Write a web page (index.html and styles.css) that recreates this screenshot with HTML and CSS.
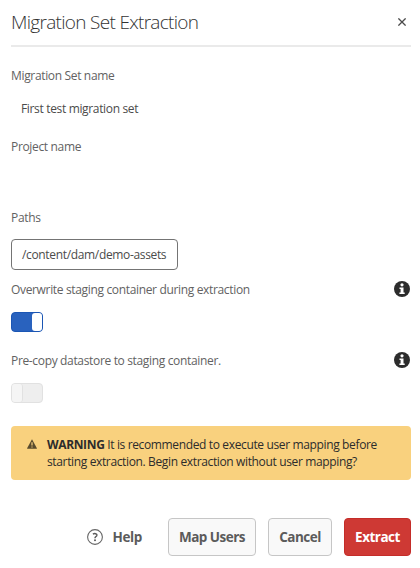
FILE: index.html
```html
<!DOCTYPE html>
<html lang="en">
<head>
<meta charset="utf-8">
<title>Migration Set Extraction</title>
<link rel="stylesheet" href="styles.css">
</head>
<body>
<main class="dialog">
  <header class="header">
    <h1 class="title"><span>Migration Set Extraction</span></h1>
    <button class="close" aria-label="Close"><svg width="8" height="8" viewBox="0 0 8 8"><path d="M.4.4 7.6 7.6M7.6.4.4 7.6" stroke="#4b4b4b" stroke-width="1.3"/></svg></button>
  </header>
  <section class="field">
    <div class="label"><span>Migration Set name</span></div>
    <div class="value"><span>First test migration set</span></div>
  </section>
  <section class="field">
    <div class="label"><span>Project name</span></div>
  </section>
  <section class="field">
    <div class="label"><span>Paths</span></div>
    <div class="path"><span>/content/dam/demo-assets</span></div>
  </section>
  <section class="field option">
    <div class="label"><span>Overwrite staging container during extraction</span>
      <svg class="info" viewBox="0 0 16 16"><circle cx="8" cy="8" r="8" fill="#2c2c2c"/><circle cx="8" cy="3.8" r="1.6" fill="#fff"/><path d="M5.5 6.5h4v5h1.2V13H5.4v-1.5h1.2V8H5.5z" fill="#fff"/></svg>
    </div>
    <div class="switch on"><i class="knob"></i></div>
  </section>
  <section class="field option">
    <div class="label"><span>Pre-copy datastore to staging container.</span>
      <svg class="info" viewBox="0 0 16 16"><circle cx="8" cy="8" r="8" fill="#2c2c2c"/><circle cx="8" cy="3.8" r="1.6" fill="#fff"/><path d="M5.5 6.5h4v5h1.2V13H5.4v-1.5h1.2V8H5.5z" fill="#fff"/></svg>
    </div>
    <div class="switch off"><i class="knob"></i></div>
  </section>
  <section class="alert">
    <svg class="warn" width="10" height="10" viewBox="0 0 10 10"><path d="M5 .2 9.9 9.2Q10 9.8 9.5 9.8H.5Q0 9.8.1 9.2Z" fill="#594b2d"/><path d="M4.4 3.2h1.2v3.3H4.4zM4.4 7.4h1.2v1.2H4.4z" fill="#f9d17e"/></svg>
    <p class="message"><span><b>WARNING</b> It is recommended to execute user mapping before</span><br><span>starting extraction. Begin extraction without user mapping?</span></p>
  </section>
  <footer class="actions">
    <a class="help"><svg width="16" height="16" viewBox="0 0 16 16" fill="none"><circle cx="8" cy="8" r="7.4" stroke="#666" stroke-width="1.1"/><path d="M5.9 5.2Q7.2 4.4 8.6 4.7 10.3 5.2 9.7 6.7C9.3 7.6 8 7.8 8 9.3" stroke="#5b5b5b" stroke-width="1.5"/><circle cx="8" cy="11.3" r="1" fill="#5b5b5b"/></svg><span>Help</span></a>
    <button class="btn map">Map Users</button>
    <button class="btn cancel">Cancel</button>
    <button class="btn extract">Extract</button>
  </footer>
</main>
</body>
</html>
```
FILE: styles.css
```css
* { box-sizing: border-box; }
body { margin: 0; background: #fff; color: #4b4b4b; font: 12px/20px "Open Sans", "Noto Sans", sans-serif; letter-spacing: -.34px; }
span { white-space: nowrap; }
.dialog { width: 420px; height: 568px; padding: 0 9px 0 11px; }
.header { height: 47px; border-bottom: 2px solid #eaeaea; display: flex; align-items: center; justify-content: space-between; }
.title { margin: -2px 0 0; font: 300 19px/24px "Open Sans", "Noto Sans", sans-serif; letter-spacing: -.69px; color: #323232; }
.close { border: 0; padding: 0; margin: -2px 5px 0 0; background: none; display: flex; }
.field { height: 71px; }
.header + .field { margin-top: 18px; }
.label { height: 22px; display: flex; align-items: center; justify-content: space-between; color: #626262; }
.option .label span { padding-top: 2px; }
.value { padding: 12px 10px 0; line-height: 20px; }
.info { width: 16px; height: 16px; margin-right: 1px; }
.path { margin-top: 10px; width: 167px; height: 31px; border: 1px solid #747474; border-radius: 4px; padding-left: 10px; line-height: 29px; }
.switch { margin-top: 12px; width: 32px; height: 20px; border: 1px solid; border-radius: 4px; display: flex; }
.knob { width: 10px; border-radius: 3px; }
.on { background: #2962be; border-color: #1b56b4; justify-content: flex-end; }
.on .knob { background: #fff; }
.off { background: #eee; border-color: #e1e1e1; }
.off .knob { width: 11px; background: #f5f5f5; border-right: 1px solid #e1e1e1; }
.alert { margin-top: 6px; height: 54px; border-radius: 4px; background: #f9d17e; color: #2c2c2c; display: flex; padding: 10px 16px; line-height: 17px; letter-spacing: -.36px; }
.warn { margin: 3px 10px 0 0; flex: none; }
.message { margin: 0; }
.actions { margin-top: 38px; display: flex; align-items: center; justify-content: flex-end; gap: 12px; color: #5b5b5b; font-weight: 700; }
.help { display: flex; align-items: center; gap: 9px; margin-right: 14px; font-size: 13.5px; }
.btn { height: 38px; padding: 0; border: 1px solid #c6c6c6; border-radius: 4px; background: #f9f9f9; color: #5b5b5b; font: 700 13.5px/20px "Open Sans", "Noto Sans", sans-serif; letter-spacing: -.5px; }
.map { width: 88px; }
.cancel { width: 64px; }
.extract { width: 67px; background: #ce3934; border-color: #c42d29; color: #fff; }
```
